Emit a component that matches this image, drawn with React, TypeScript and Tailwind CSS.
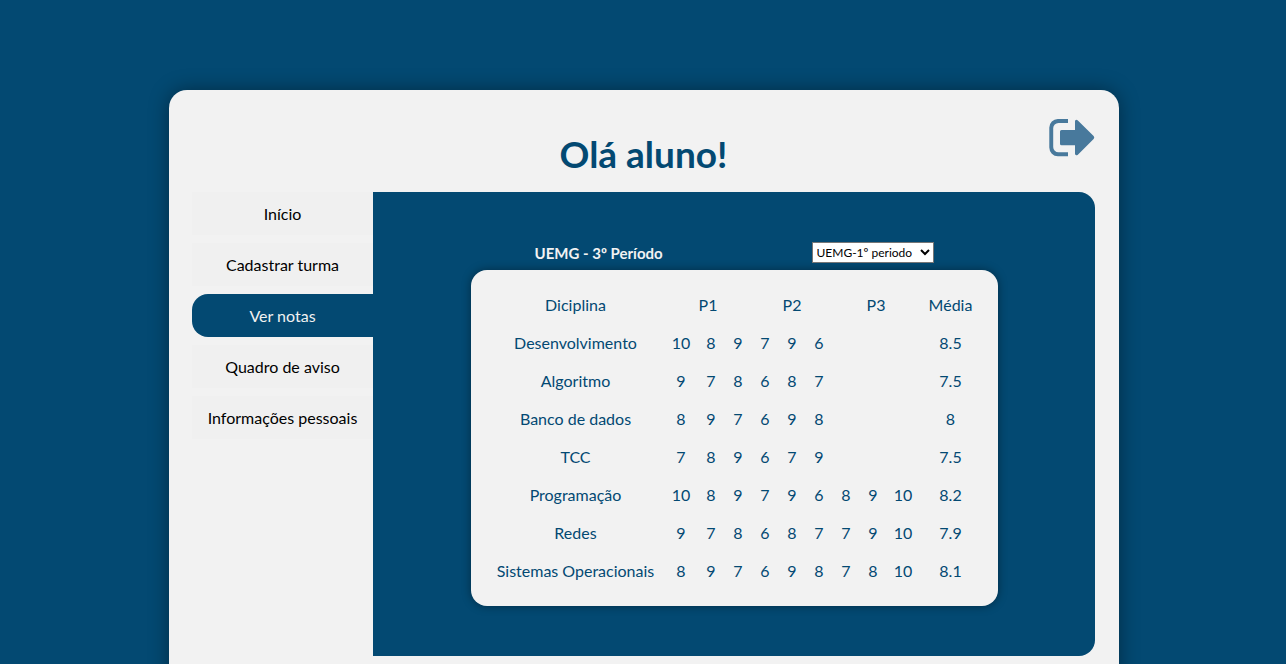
import React, { useState } from "react";

type Grade = {
  subject: string;
  marks: (number | null)[];
  average: string;
};

const menu = [
  "Início",
  "Cadastrar turma",
  "Ver notas",
  "Quadro de aviso",
  "Informações pessoais",
];

const grades: Grade[] = [
  { subject: "Desenvolvimento", marks: [10, 8, 9, 7, 9, 6, null, null, null], average: "8.5" },
  { subject: "Algoritmo", marks: [9, 7, 8, 6, 8, 7, null, null, null], average: "7.5" },
  { subject: "Banco de dados", marks: [8, 9, 7, 6, 9, 8, null, null, null], average: "8" },
  { subject: "TCC", marks: [7, 8, 9, 6, 7, 9, null, null, null], average: "7.5" },
  { subject: "Programação", marks: [10, 8, 9, 7, 9, 6, 8, 9, 10], average: "8.2" },
  { subject: "Redes", marks: [9, 7, 8, 6, 8, 7, 7, 9, 10], average: "7.9" },
  { subject: "Sistemas Operacionais", marks: [8, 9, 7, 6, 9, 8, 7, 8, 10], average: "8.1" },
];

function ExitIcon() {
  return (
    <svg viewBox="0 0 46 38" className="h-[38px] w-[46px] fill-[#48799c]" aria-hidden="true">
      <path d="M9 0H19V4H9.500A5.300 5.300 0 0 0 4.200 9.300V28A5.300 5.300 0 0 0 9.500 33.300H19V37.200H9A8.600 8.600 0 0 1 .300 28.500V8.700A8.600 8.600 0 0 1 9 0Z" />
      <path d="M12.500 11H26V2.500Q26 0 28.600 1.200L44.600 17Q46 18.500 44.600 20L28.600 35.900Q26 37 26 34.500V26.200H12.500Q11 26.200 11 24.700V12.500Q11 11 12.500 11Z" />
    </svg>
  );
}

function Sidebar({ active, onSelect }: { active: string; onSelect: (item: string) => void }) {
  return (
    <nav className="flex w-[181px] shrink-0 flex-col gap-2">
      {menu.map((item) => (
        <button
          key={item}
          type="button"
          onClick={() => onSelect(item)}
          className={
            item === active
              ? "h-[43px] rounded-l-2xl bg-[#034972] text-base text-[#f1f1f1]"
              : "h-[43px] bg-[#f0f0f0] text-base text-black"
          }
        >
          {item}
        </button>
      ))}
    </nav>
  );
}

function GradeTable() {
  return (
    <div className="rounded-2xl bg-[#f2f2f2] p-4 shadow-[0_0_10px_rgba(0,0,0,0.4)]">
      <table className="w-full table-fixed border-collapse text-center text-base text-[#034972]">
        <colgroup>
          <col className="w-[178px]" />
          <col className="w-[33px]" />
          <col className="w-[27px]" />
          <col className="w-[27px]" />
          <col className="w-[27px]" />
          <col className="w-[27px]" />
          <col className="w-[27px]" />
          <col className="w-[27px]" />
          <col className="w-[27px]" />
          <col className="w-[33px]" />
          <col className="w-[62px]" />
        </colgroup>
        <thead>
          <tr className="h-[38px]">
            <th scope="col" className="font-normal">Diciplina</th>
            <th scope="colgroup" colSpan={3} className="font-normal">P1</th>
            <th scope="colgroup" colSpan={3} className="font-normal">P2</th>
            <th scope="colgroup" colSpan={3} className="font-normal">P3</th>
            <th scope="col" className="font-normal">Média</th>
          </tr>
        </thead>
        <tbody>
          {grades.map((row) => (
            <tr key={row.subject} className="h-[38px]">
              <td className="whitespace-nowrap">{row.subject}</td>
              {row.marks.map((mark, i) => (
                <td key={i}>{mark}</td>
              ))}
              <td>{row.average}</td>
            </tr>
          ))}
        </tbody>
      </table>
    </div>
  );
}

export default function App() {
  const [active, setActive] = useState("Ver notas");

  return (
    <div className="min-h-screen bg-[#034972] pt-[90px] pl-0.5 font-['Lato',sans-serif]">
      <main className="mx-auto w-full max-w-[950px] rounded-t-[18px] bg-[#f2f2f2] pr-6 pb-6 pl-[23px] shadow-[0_0_20px_rgba(0,0,0,0.4)]">
        <header className="grid h-[102px] grid-cols-[1fr_auto_1fr]">
          <h1 className="col-start-2 pt-10 text-[37px] leading-[48px] font-bold text-[#034972]">
            Olá aluno!
          </h1>
          <button type="button" aria-label="Sair" className="mt-[29px] self-start justify-self-end">
            <ExitIcon />
          </button>
        </header>
        <div className="flex">
          <Sidebar active={active} onSelect={setActive} />
          <section className="flex flex-1 justify-center rounded-r-2xl bg-[#034972] py-[50px]">
            <div className="w-full max-w-[527px]">
              <div className="flex h-7 items-start justify-between px-16">
                <h2 className="text-[15px] leading-[22px] font-bold text-[#f2f2f2]">UEMG - 3º Período</h2>
                <select
                  aria-label="Período"
                  className="h-[21px] w-[122px] border border-[#767676] bg-white text-xs text-black"
                >
                  <option>UEMG-1º periodo</option>
                </select>
              </div>
              <GradeTable />
            </div>
          </section>
        </div>
      </main>
    </div>
  );
}
